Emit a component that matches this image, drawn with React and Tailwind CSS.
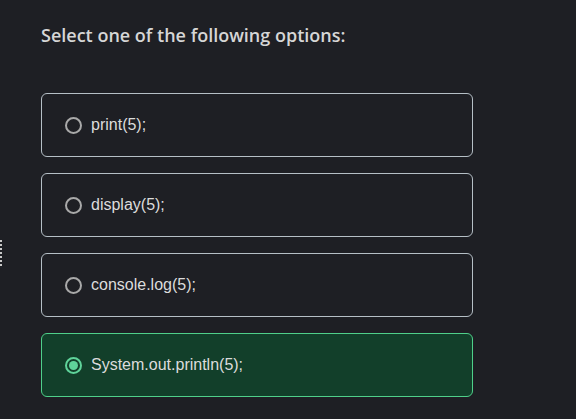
import React from "react";

const options = ["print(5);", "display(5);", "console.log(5);", "System.out.println(5);"];

export default function App() {
  const selected = 3;
  return (
    <div className="relative w-[576px] h-[419px] overflow-hidden bg-[#1e1f24]">
      <div className="absolute left-0 top-[240px] flex flex-col gap-[2px]">
        {[0, 1, 2, 3, 4, 5, 6].map((i) => (
          <div key={i} className="w-[2px] h-[2px] bg-[#c8c8c8]" />
        ))}
      </div>
      <div className="pl-[41px] pt-[21px] w-[473px]">
        <h2 className="text-[18px] font-semibold text-[#d6d6d6] leading-[28px] font-['Open_Sans',sans-serif]">
          Select one of the following options:
        </h2>
        <div className="mt-[44px] flex flex-col gap-4">
          {options.map((opt, idx) => {
            const on = idx === selected;
            return (
              <div
                key={idx}
                className={
                  on
                    ? "h-16 rounded-md border border-[#4fd08a] bg-[#123f2a] flex items-center pl-[23px]"
                    : "h-16 rounded-md border border-[#b5bfc6] bg-[#1e1f24] flex items-center pl-[23px]"
                }
              >
                {on ? (
                  <span className="w-[17px] h-[17px] rounded-full border-2 border-[#5fd39a] flex items-center justify-center">
                    <span className="w-[9px] h-[9px] rounded-full bg-[#5fd39a]" />
                  </span>
                ) : (
                  <span className="w-[17px] h-[17px] rounded-full border-2 border-[#a9a9a9]" />
                )}
                <span className="ml-[9px] text-[16px] text-[#dcdcdc] font-['Liberation_Sans',Arial,sans-serif]">
                  {opt}
                </span>
              </div>
            );
          })}
        </div>
      </div>
    </div>
  );
}
